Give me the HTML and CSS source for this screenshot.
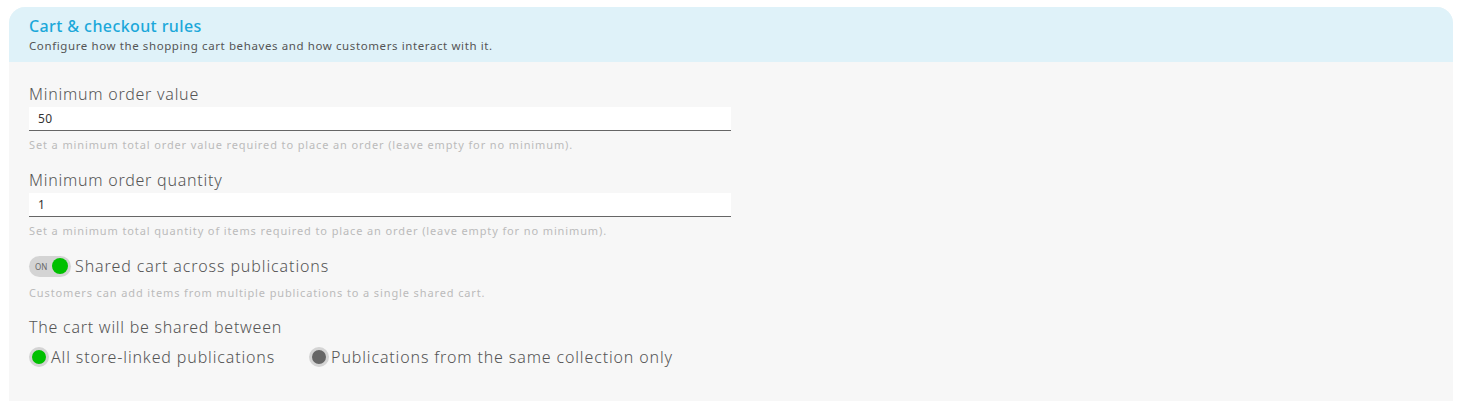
FILE: index.html
```html
<!DOCTYPE html>
<html>
<head>
<meta charset="utf-8">
<link rel="stylesheet" href="styles.css">
</head>
<body>
<section class="card">
  <header class="card-head">
    <h2 class="title">Cart &amp; checkout rules</h2>
    <p class="subtitle">Configure how the shopping cart behaves and how customers interact with it.</p>
  </header>
  <div class="card-body">
    <div class="field">
      <label class="label">Minimum order value</label>
      <div class="input">50</div>
      <p class="help">Set a minimum total order value required to place an order (leave empty for no minimum).</p>
    </div>
    <div class="field">
      <label class="label">Minimum order quantity</label>
      <div class="input">1</div>
      <p class="help">Set a minimum total quantity of items required to place an order (leave empty for no minimum).</p>
    </div>
    <div class="field">
      <div class="toggle-row">
        <span class="toggle"><span class="toggle-on">ON</span><span class="knob"></span></span>
        <span class="toggle-label">Shared cart across publications</span>
      </div>
      <p class="help toggle-help">Customers can add items from multiple publications to a single shared cart.</p>
    </div>
    <div class="field">
      <label class="label">The cart will be shared between</label>
      <div class="radios">
        <span class="radio"><span class="dot checked"></span>All store-linked publications</span>
        <span class="radio"><span class="dot"></span>Publications from the same collection only</span>
      </div>
    </div>
  </div>
</section>
</body>
</html>
```

FILE: styles.css
```css
html, body { margin: 0; padding: 0; background: #fff; }
body { padding: 7px 4px 0 9px; font-family: "Noto Sans", "DejaVu Sans", sans-serif; color: #555; }
.card { border-radius: 16px 16px 0 0; overflow: hidden; background: #f7f7f7; height: 394px; }
.card-head { background: #dff2f9; padding: 9px 20px 0 20px; height: 46px; }
.title { margin: 0; font-size: 16px; font-weight: 500; color: #1ba8da; line-height: 20px; letter-spacing: 0.4px; }
.subtitle { margin: 3px 0 0; font-size: 11.5px; color: #555; line-height: 14px; letter-spacing: 0.6px; }
.card-body { padding: 21px 20px 0 20px; }
.field { width: 702px; margin-bottom: 17px; }
.label { display: block; font-size: 16px; font-weight: 300; line-height: 22px; color: #555; letter-spacing: 0.75px; }
.input { margin-top: 2px; height: 23px; background: #fff; border-bottom: 1px solid #666; font-size: 12px; line-height: 23px; padding-left: 9px; color: #333; letter-spacing: 0.3px; }
.help { margin: 6px 0 0; font-size: 11px; line-height: 15px; color: #bbb; letter-spacing: 0.88px; }
.help.toggle-help { margin-top: 7.5px; }
.field:nth-child(3) { margin-bottom: 16px; }
.toggle-row { display: flex; align-items: center; gap: 4px; height: 22px; }
.toggle { width: 42px; height: 21px; border-radius: 11px; background: #d4d4d4; display: flex; align-items: center; justify-content: space-between; padding: 0 3px 0 6px; box-sizing: border-box; }
.toggle-on { font-size: 8px; color: #666; }
.knob { width: 16px; height: 16px; border-radius: 50%; background: #00c000; }
.toggle-label { font-size: 16px; font-weight: 300; letter-spacing: 0.9px; }
.radios { display: flex; gap: 34px; margin-top: 8px; height: 22px; font-size: 16px; font-weight: 300; }
.radio { display: flex; align-items: center; gap: 2px; letter-spacing: 0.86px; }
.dot { width: 14px; height: 14px; border-radius: 50%; border: 3px solid #d4d4d4; background: #666; }
.dot.checked { background: #00c000; }
```
